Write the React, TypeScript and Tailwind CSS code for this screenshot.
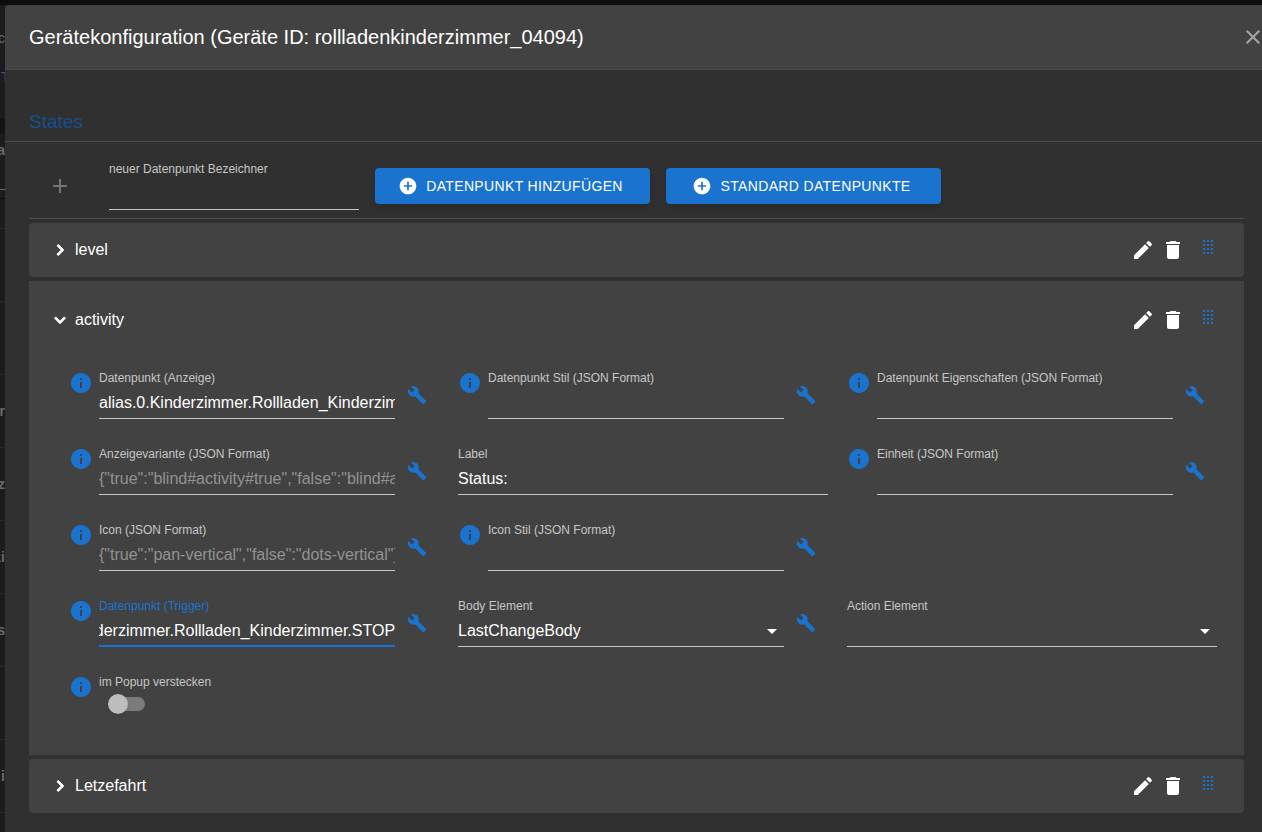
import { useEffect, useId, useRef, useState, type ReactNode } from 'react';
import { MdAdd, MdAddCircle, MdArrowDropDown, MdDelete, MdEdit, MdInfo } from 'react-icons/md';

function WrenchIcon() {
  return (
    <svg width="20" height="20" viewBox="0 0 24 24" fill="currentColor">
      <path d="M22.7 19 13.6 9.9C14.5 7.6 14 4.9 12.1 3 10.1 1 7.1.6 4.7 1.7L9 6 6 9 1.6 4.7C.4 7.1.9 10.1 2.9 12.1 4.8 14 7.5 14.5 9.8 13.6L18.9 22.7C19.3 23.1 19.9 23.1 20.3 22.7L22.6 20.4C23.1 20 23.1 19.3 22.7 19Z" />
    </svg>
  );
}

function ChevronIcon({ open }: { open?: boolean }) {
  return (
    <svg width="24" height="24" viewBox="0 0 24 24" fill="none" stroke="currentColor" strokeWidth="2.6">
      <path d={open ? 'M6.9 9.4 12 14.5 17.1 9.4' : 'M9.4 6.9 14.5 12 9.4 17.1'} />
    </svg>
  );
}

interface CellProps {
  info?: boolean;
  wrench?: boolean;
  children: ReactNode;
}

// One grid cell: optional info icon, the field itself, optional edit button
function Cell({ info, wrench, children }: CellProps) {
  return (
    <div className="flex h-12 items-start">
      {info && <MdInfo className="mr-1.5 size-6 shrink-0 text-[#1a73ce]" />}
      <div className="min-w-0 flex-1">{children}</div>
      {wrench && (
        <button type="button" aria-label="Bearbeiten" className="flex h-12 w-11 shrink-0 items-center justify-center text-[#1a73ce]">
          <WrenchIcon />
        </button>
      )}
    </div>
  );
}

interface TextFieldProps {
  label: string;
  value?: string;
  placeholder?: string;
  active?: boolean;
}

function TextField({ label, value = '', placeholder, active }: TextFieldProps) {
  const id = useId();
  const ref = useRef<HTMLInputElement>(null);
  const [text, setText] = useState(value);

  // The active field shows the end of its value
  useEffect(() => {
    if (active && ref.current) ref.current.scrollLeft = ref.current.scrollWidth;
  }, [active]);

  return (
    <div className="flex flex-col gap-0.5">
      <label htmlFor={id} className={`text-xs leading-[14px] whitespace-nowrap ${active ? 'text-[#1a73ce]' : 'text-[#c6c6c6]'}`}>
        {label}
      </label>
      <input
        ref={ref}
        id={id}
        type="text"
        value={text}
        placeholder={placeholder}
        onChange={e => setText(e.target.value)}
        className={`h-8 w-full bg-transparent text-base text-white outline-none placeholder:text-[#929292] ${active ? 'border-b-2 border-[#1a73ce] pt-px' : 'border-b border-[#c6c6c6]'}`}
      />
    </div>
  );
}

function SelectField({ label, options }: { label: string; options: string[] }) {
  const id = useId();
  return (
    <div className="flex flex-col gap-0.5">
      <label htmlFor={id} className="text-xs leading-[14px] text-[#c6c6c6]">{label}</label>
      <div className="relative">
        <select id={id} className="h-8 w-full appearance-none border-b border-[#c6c6c6] bg-transparent text-base text-white outline-none">
          {options.map(o => (
            <option key={o} value={o}>{o}</option>
          ))}
        </select>
        <MdArrowDropDown className="pointer-events-none absolute top-1 right-0 size-6 text-white" />
      </div>
    </div>
  );
}

function SwitchField({ label }: { label: string }) {
  const id = useId();
  return (
    <div className="flex flex-col gap-[5px]">
      <label htmlFor={id} className="text-xs leading-[14px] text-[#c6c6c6]">{label}</label>
      <div className="relative ml-[9px] flex h-5 w-[37px] items-center justify-end">
        <input id={id} type="checkbox" role="switch" className="peer absolute inset-0 z-10 m-0 cursor-pointer opacity-0" />
        <span className="h-3.5 w-[34px] rounded-full bg-[#7b7b7b]" />
        <span className="absolute left-0 size-5 rounded-full bg-[#bdbdbd] shadow peer-checked:left-[17px]" />
      </div>
    </div>
  );
}

function DragHandle() {
  return (
    <svg width="10" height="14" viewBox="0 0 10 14" fill="#1a73ce" shapeRendering="crispEdges">
      {[0, 4, 8, 12].map(y => [0, 4, 8].map(x => <rect key={`${x}-${y}`} x={x} y={y} width="2" height="2" />))}
    </svg>
  );
}

interface PanelProps {
  title: string;
  open?: boolean;
  children?: ReactNode;
}

function Panel({ title, open, children }: PanelProps) {
  return (
    <section className={`bg-[#424242] ${open ? '' : 'rounded'}`}>
      <header className={`flex items-center pr-[31px] pl-[19px] text-white ${open ? 'h-[78px]' : 'h-[54px]'}`}>
        <button type="button" aria-expanded={!!open} className="flex flex-1 items-center gap-[3px] text-left">
          <ChevronIcon open={open} />
          <span className="text-base">{title}</span>
        </button>
        <div className="flex items-center gap-1.5">
          <button type="button" aria-label="Umbenennen"><MdEdit className="size-6" /></button>
          <button type="button" aria-label="Löschen"><MdDelete className="size-6" /></button>
        </div>
        <button type="button" aria-label="Verschieben" className="ml-[18px] pb-1.5">
          <DragHandle />
        </button>
      </header>
      {children}
    </section>
  );
}

// Rows of the page behind the dialog, only their last pixels stay visible
const BACKDROP_ROWS = ['', '', 'r', 'z', 'zi', 's', '', 'i'];

function Backdrop() {
  return (
    <div aria-hidden="true" className="w-[5px] shrink-0 overflow-hidden bg-[#1c1c1c] text-sm font-bold text-[#6a6a6a]">
      <div className="flex h-[66px] items-center justify-end font-normal">oc</div>
      <div className="flex h-3 items-center justify-start pl-px font-normal text-[#3d5866]">T</div>
      <div className="mt-[35px] h-4 bg-[#131313]" />
      <div className="flex h-8 items-center justify-end">na</div>
      <div className="h-6 border-b border-[#6a6a6a]" />
      <div className="h-[9px] border-b border-[#0d0d0d]" />
      <div className="h-[30px] border-b border-[#292929]" />
      {BACKDROP_ROWS.map((text, i) => (
        <div key={i} className="flex h-[73px] items-center justify-end border-b border-[#292929]">{text}</div>
      ))}
    </div>
  );
}

function ActionButton({ children }: { children: ReactNode }) {
  return (
    <button
      type="button"
      className="flex h-9 w-[275px] items-center justify-center gap-2 rounded bg-[#1a73ce] text-sm tracking-wide whitespace-nowrap text-white uppercase shadow-md"
    >
      <MdAddCircle className="-ml-1 size-5" />
      {children}
    </button>
  );
}

export default function App() {
  return (
    <div className="flex min-h-screen flex-col bg-[#0d0d0d] font-['Liberation_Sans',Arial,sans-serif]">
      <div className="flex flex-1 border-t-[5px] border-[#0d0d0d] bg-[#1c1c1c]">
        <Backdrop />
        <div role="dialog" aria-labelledby="dialog-title" className="min-w-0 flex-1 overflow-hidden rounded-tl bg-[#303030]">
          <header className="flex h-[65px] items-center justify-between border-b border-[#4c4c4c] bg-[#424242] pr-px pl-6">
            <h1 id="dialog-title" className="text-xl text-white">
              Gerätekonfiguration (Geräte ID: rollladenkinderzimmer_04094)
            </h1>
            <button type="button" aria-label="Schließen">
              <svg width="16" height="16" viewBox="0 0 16 16" stroke="#a6a6a6" strokeWidth="2">
                <path d="M1.7 1.7 14.3 14.3M14.3 1.7 1.7 14.3" />
              </svg>
            </button>
          </header>

          <div className="flex h-[72px] items-end border-b border-[#4c4c4c] px-6 pb-[7px]">
            <h2 className="text-[19px] leading-6 text-[#184f8c]">States</h2>
          </div>

          <main className="flex flex-col gap-1 pr-[18px] pb-[19px] pl-6">
            <div className="flex items-center border-b border-[#4c4c4c] pt-5 pb-2">
              <button type="button" aria-label="Hinzufügen" className="flex w-20 justify-center pr-[18px] text-[#757575]">
                <MdAdd className="size-6" />
              </button>
              <div className="w-[250px]">
                <TextField label="neuer Datenpunkt Bezeichner" />
              </div>
              <div className="ml-4 flex gap-4">
                <ActionButton>Datenpunkt hinzufügen</ActionButton>
                <ActionButton>Standard Datenpunkte</ActionButton>
              </div>
            </div>

            <Panel title="level" />

            <Panel title="activity" open>
              <div className="grid grid-cols-3 gap-x-[19px] gap-y-7 pt-3 pr-[27px] pb-8 pl-10">
                <Cell info wrench>
                  <TextField label="Datenpunkt (Anzeige)" value="alias.0.Kinderzimmer.Rollladen_Kinderzimmer" />
                </Cell>
                <Cell info wrench>
                  <TextField label="Datenpunkt Stil (JSON Format)" />
                </Cell>
                <Cell info wrench>
                  <TextField label="Datenpunkt Eigenschaften (JSON Format)" />
                </Cell>

                <Cell info wrench>
                  <TextField label="Anzeigevariante (JSON Format)" placeholder={'{"true":"blind#activity#true","false":"blind#activity#false"}'} />
                </Cell>
                <Cell>
                  <TextField label="Label" value="Status:" />
                </Cell>
                <Cell info wrench>
                  <TextField label="Einheit (JSON Format)" />
                </Cell>

                <Cell info wrench>
                  <TextField label="Icon (JSON Format)" placeholder={'{"true":"pan-vertical","false":"dots-vertical"}'} />
                </Cell>
                <Cell info wrench>
                  <TextField label="Icon Stil (JSON Format)" />
                </Cell>
                <div />

                <Cell info wrench>
                  <TextField label="Datenpunkt (Trigger)" value="alias.0.Kinderzimmer.Rollladen_Kinderzimmer.STOP" active />
                </Cell>
                <Cell wrench>
                  <SelectField label="Body Element" options={['LastChangeBody']} />
                </Cell>
                <Cell>
                  <SelectField label="Action Element" options={['']} />
                </Cell>

                <Cell info>
                  <SwitchField label="im Popup verstecken" />
                </Cell>
              </div>
            </Panel>

            <Panel title="Letzefahrt" />
          </main>
        </div>
      </div>
    </div>
  );
}
